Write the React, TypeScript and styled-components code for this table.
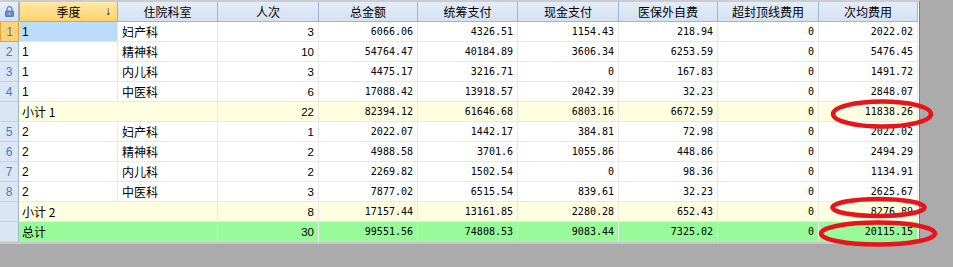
import styled, { createGlobalStyle, css } from "styled-components";

const GlobalStyle = createGlobalStyle`
  html, body {
    margin: 0;
    padding: 0;
    background: #ababab;
  }
  #root {
    width: 953px;
    height: 267px;
    position: relative;
    overflow: hidden;
  }
`;

const Sheet = styled.div`
  width: 919px;
  border-top: 2px solid #c9cdd3;
  border-right: 1px solid #7d7d7d;
  border-bottom: 2px solid #c8c8c8;
  display: grid;
  grid-template-columns: 19px 99px 100px 101px 99px 100px 101px 99px 101px 99px;
  grid-auto-rows: 20px;
  background: #fff;
  font-family: "Noto Sans CJK SC", "Liberation Sans", sans-serif;
  font-size: 12px;
  color: #000;
`;

const Corner = styled.div`
  background: linear-gradient(#e6eef8, #d3e0f1);
  border-right: 1px solid #9eb6ce;
  border-bottom: 1px solid #9eb6ce;
  display: flex;
  align-items: center;
  justify-content: center;
`;

const HeadCell = styled.div<{ $sorted?: boolean }>`
  background: linear-gradient(#e4ecf7, #d4e2f3);
  border-right: 1px solid #9eb6ce;
  border-bottom: 1px solid #9eb6ce;
  display: flex;
  align-items: center;
  justify-content: center;
  position: relative;
  line-height: 1;
  ${(p) =>
    p.$sorted &&
    css`
      background: linear-gradient(#ffe7a6, #ffd36b);
      border: 1px solid #e3a53a;
      border-top: none;
    `}
`;

const SortArrow = styled.span`
  position: absolute;
  right: 6px;
  top: 3px;
  font-family: "Liberation Sans", sans-serif;
  font-size: 12px;
`;

const RowHead = styled.div<{ $active?: boolean }>`
  background: #dae6f4;
  border-right: 1px solid #9eb6ce;
  border-bottom: 1px solid #c0d2e6;
  color: #3d7cc9;
  font-family: "Liberation Sans", sans-serif;
  display: flex;
  align-items: center;
  justify-content: center;
  ${(p) =>
    p.$active &&
    css`
      background: #ffd37a;
      border: 1px solid #e3a53a;
      border-top: none;
    `}
`;

type Tone = "plain" | "sub" | "total";

const toneBg: Record<Tone, string> = {
  plain: "#ffffff",
  sub: "#fefee1",
  total: "#98fa98",
};

const Cell = styled.div<{
  $tone: Tone;
  $num?: boolean;
  $mono?: boolean;
  $span?: number;
  $selected?: boolean;
}>`
  background: ${(p) => (p.$selected ? "#bcdcfd" : toneBg[p.$tone])};
  border-right: 1px solid ${(p) => (p.$tone === "total" ? "#f2f2f2" : "#e8e8e8")};
  border-bottom: 1px solid ${(p) => (p.$tone === "total" ? "#98fa98" : "#e8e8e8")};
  display: flex;
  align-items: center;
  justify-content: ${(p) => (p.$num ? "flex-end" : "flex-start")};
  padding: 0 ${(p) => (p.$num ? "4px" : "0")} 0 ${(p) => (p.$num ? "0" : "3px")};
  grid-column: span ${(p) => p.$span ?? 1};
  white-space: nowrap;
  overflow: hidden;
  ${(p) =>
    p.$mono &&
    css`
      font-family: "DejaVu Sans Mono", "Liberation Mono", monospace;
      font-size: 10px;
    `}
  ${(p) =>
    p.$num &&
    !p.$mono &&
    css`
      font-family: "Liberation Sans", sans-serif;
      font-size: 11.5px;
    `}
`;

const Dept = styled.span`
  padding-left: 1px;
`;

const Quarter = styled.span`
  font-family: "Liberation Sans", sans-serif;
`;

const Marks = styled.svg`
  position: absolute;
  left: 0;
  top: 0;
  pointer-events: none;
`;

const headers = ["住院科室", "人次", "总金额", "统筹支付", "现金支付", "医保外自费", "超封顶线费用", "次均费用"];

type Row =
  | { kind: "data"; no: number; q: string; dept: string; vals: string[] }
  | { kind: "sub" | "total"; label: string; vals: string[] };

const rows: Row[] = [
  { kind: "data", no: 1, q: "1", dept: "妇产科", vals: ["3", "6066.06", "4326.51", "1154.43", "218.94", "0", "2022.02"] },
  { kind: "data", no: 2, q: "1", dept: "精神科", vals: ["10", "54764.47", "40184.89", "3606.34", "6253.59", "0", "5476.45"] },
  { kind: "data", no: 3, q: "1", dept: "内儿科", vals: ["3", "4475.17", "3216.71", "0", "167.83", "0", "1491.72"] },
  { kind: "data", no: 4, q: "1", dept: "中医科", vals: ["6", "17088.42", "13918.57", "2042.39", "32.23", "0", "2848.07"] },
  { kind: "sub", label: "小计 1", vals: ["22", "82394.12", "61646.68", "6803.16", "6672.59", "0", "11838.26"] },
  { kind: "data", no: 5, q: "2", dept: "妇产科", vals: ["1", "2022.07", "1442.17", "384.81", "72.98", "0", "2022.02"] },
  { kind: "data", no: 6, q: "2", dept: "精神科", vals: ["2", "4988.58", "3701.6", "1055.86", "448.86", "0", "2494.29"] },
  { kind: "data", no: 7, q: "2", dept: "内儿科", vals: ["2", "2269.82", "1502.54", "0", "98.36", "0", "1134.91"] },
  { kind: "data", no: 8, q: "2", dept: "中医科", vals: ["3", "7877.02", "6515.54", "839.61", "32.23", "0", "2625.67"] },
  { kind: "sub", label: "小计 2", vals: ["8", "17157.44", "13161.85", "2280.28", "652.43", "0", "8276.89"] },
  { kind: "total", label: "总计", vals: ["30", "99551.56", "74808.53", "9083.44", "7325.02", "0", "20115.15"] },
];

function Lock() {
  return (
    <svg width="9" height="11" viewBox="0 0 9 11">
      <path d="M2 5V3.2a2.5 2.5 0 0 1 5 0V5" fill="none" stroke="#5b7fb3" strokeWidth="1.2" />
      <rect x="0.5" y="5" width="8" height="5.5" rx="0.6" fill="#6f8fc4" stroke="#4a6da3" strokeWidth="0.8" />
      <rect x="4" y="6.6" width="1" height="2.2" fill="#dfe8f5" />
    </svg>
  );
}

function Values({ vals, tone }: { vals: string[]; tone: Tone }) {
  return (
    <>
      {vals.map((v, i) => (
        <Cell key={i} $tone={tone} $num $mono={i > 0}>
          {v}
        </Cell>
      ))}
    </>
  );
}

export default function App() {
  return (
    <>
      <GlobalStyle />
      <Sheet>
        <Corner>
          <Lock />
        </Corner>
        <HeadCell $sorted>
          季度
          <SortArrow>↓</SortArrow>
        </HeadCell>
        {headers.map((h) => (
          <HeadCell key={h}>{h}</HeadCell>
        ))}

        {rows.map((r, idx) =>
          r.kind === "data" ? (
            <Row key={idx} row={r} />
          ) : (
            <SummaryRow key={idx} label={r.label} vals={r.vals} tone={r.kind} />
          )
        )}
      </Sheet>
      <Marks width="953" height="267">
        <ellipse cx="882" cy="114" rx="49" ry="12.5" fill="none" stroke="#e8141c" strokeWidth="4.5" />
        <ellipse cx="878.5" cy="207.5" rx="46" ry="8.5" fill="none" stroke="#e8141c" strokeWidth="4.5" />
        <ellipse cx="878" cy="233.5" rx="57" ry="11" fill="none" stroke="#e8141c" strokeWidth="4.5" />
      </Marks>
    </>
  );
}

function Row({ row }: { row: Extract<Row, { kind: "data" }> }) {
  const active = row.no === 1;
  return (
    <>
      <RowHead $active={active}>{row.no}</RowHead>
      <Cell $tone="plain" $selected={active}>
        <Quarter>{row.q}</Quarter>
      </Cell>
      <Cell $tone="plain">
        <Dept>{row.dept}</Dept>
      </Cell>
      <Values vals={row.vals} tone="plain" />
    </>
  );
}

function SummaryRow({ label, vals, tone }: { label: string; vals: string[]; tone: Tone }) {
  return (
    <>
      <RowHead />
      <Cell $tone={tone} $span={2}>
        {label}
      </Cell>
      <Values vals={vals} tone={tone} />
    </>
  );
}
